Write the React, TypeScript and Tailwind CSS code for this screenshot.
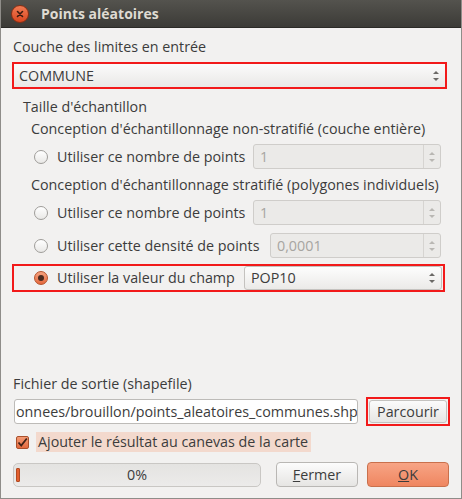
import React from "react";

const font = { fontFamily: '"Open Sans", "DejaVu Sans", sans-serif' };

function Arrows({ dim = false }: { dim?: boolean }) {
  const c = dim ? "#b9b7b3" : "#6b6966";
  return (
    <svg width="8" height="14" viewBox="0 0 8 14" className="shrink-0">
      <path d="M1 5 L4 2 L7 5 Z" fill={c} />
      <path d="M1 9 L4 12 L7 9 Z" fill={c} />
    </svg>
  );
}

function Radio({ checked = false }: { checked?: boolean }) {
  if (checked) {
    return (
      <div className="w-[14px] h-[14px] rounded-full border border-[#b5532c] bg-gradient-to-b from-[#f5a17e] to-[#e5683c] flex items-center justify-center shrink-0">
        <div className="w-[6px] h-[6px] rounded-full bg-[#4a2a1f]" />
      </div>
    );
  }
  return <div className="w-[14px] h-[14px] rounded-full border border-[#9f9d99] bg-gradient-to-b from-white to-[#e9e8e6] shrink-0" />;
}

function SpinBox({ value, width }: { value: string; width: string }) {
  return (
    <div className={`${width} h-[25px] rounded-[3px] border border-[#cfcdca] bg-[#ebeae8] flex items-stretch`}>
      <div className="flex-1 flex items-center pl-[6px] text-[14.3px] text-[#a7a5a1]">{value}</div>
      <div className="w-[17px] border-l border-[#d6d4d1] flex items-center justify-center">
        <Arrows dim />
      </div>
    </div>
  );
}

function RadioRow({ label, value, spinW, checked }: { label: string; value: string; spinW: string; checked?: boolean }) {
  return (
    <div className="flex items-center h-[25px]">
      <div className="w-[56px] pl-[33px] flex items-center">
        <Radio checked={checked} />
      </div>
      <div className="flex-1 text-[14.3px] text-[#3c3c3c] whitespace-nowrap">{label}</div>
      <SpinBox value={value} width={spinW} />
      <div className="w-[20px]" />
    </div>
  );
}

export default function App() {
  return (
    <div className="w-[462px] h-[499px] bg-[#f2f1f0] flex flex-col border-x border-b border-[#8f8d89] overflow-hidden" style={font}>
      {/* title bar */}
      <div className="h-[28px] bg-gradient-to-b from-[#54534e] to-[#3c3b37] border-b border-[#2b2a27] flex items-center shrink-0">
        <div className="ml-[10px] w-[18px] h-[18px] rounded-full bg-gradient-to-b from-[#f17a52] to-[#d9461e] border border-[#8a2f14] flex items-center justify-center">
          <svg width="8" height="8" viewBox="0 0 8 8">
            <path d="M1.5 1.5 L6.5 6.5 M6.5 1.5 L1.5 6.5" stroke="#3a1a10" strokeWidth="1.6" strokeLinecap="round" />
          </svg>
        </div>
        <div className="ml-[12px] text-[14px] font-bold text-[#dfdbd2]">Points aléatoires</div>
      </div>

      <div className="flex flex-col pl-[11px] text-[#3c3c3c] whitespace-nowrap">
        <div className="mt-[10px] h-[18px] leading-[18px] text-[14.3px] pl-[1px]">Couche des limites en entrée</div>

        <div className="mt-[6px] w-[435px] h-[27px] border-2 border-[#f21a1a] bg-gradient-to-b from-[#fbfbfb] to-[#e9e8e6] flex items-center px-[5px]">
          <div className="flex-1 text-[14.3px]">COMMUNE</div>
          <Arrows />
        </div>

        <div className="mt-[9px] h-[18px] leading-[18px] text-[14.3px] pl-[11px]">Taille d'échantillon</div>
        <div className="mt-[4px] h-[18px] leading-[18px] text-[14.3px] pl-[19px]">Conception d'échantillonnage non-stratifié (couche entière)</div>
        <div className="mt-[6px] -ml-[11px]">
          <RadioRow label="Utiliser ce nombre de points" value="1" spinW="w-[188px]" />
        </div>
        <div className="mt-[7px] h-[18px] leading-[18px] text-[14.3px] pl-[19px]">Conception d'échantillonnage stratifié (polygones individuels)</div>
        <div className="mt-[6px] -ml-[11px]">
          <RadioRow label="Utiliser ce nombre de points" value="1" spinW="w-[188px]" />
        </div>
        <div className="mt-[8px] -ml-[11px]">
          <RadioRow label="Utiliser cette densité de points" value="0,0001" spinW="w-[171px]" />
        </div>

        <div className="mt-[6px] w-[433px] h-[28px] border-2 border-[#f21a1a] flex items-center">
          <div className="w-[43px] pl-[20px] flex items-center">
            <Radio checked />
          </div>
          <div className="flex-1 text-[14.3px]">Utiliser la valeur du champ</div>
          <div className="w-[198px] h-[24px] mr-[1px] rounded-[3px] border border-[#c4c2bf] bg-gradient-to-b from-[#fdfdfd] to-[#ebeae8] flex items-center pl-[6px] pr-[5px]">
            <div className="flex-1 text-[14.3px]">POP10</div>
            <Arrows />
          </div>
        </div>

        <div className="mt-[83px] h-[18px] leading-[18px] text-[14.3px] pl-[1px]">Fichier de sortie (shapefile)</div>

        <div className="mt-[4px] flex items-center">
          <div className="ml-[2px] w-[344px] h-[25px] rounded-[3px] border border-[#bdbbb8] bg-white flex items-center overflow-hidden">
            <div className="whitespace-nowrap text-[14.3px] pl-[1px]">onnees/brouillon/points_aleatoires_communes.shp</div>
          </div>
          <div className="ml-[8px] w-[84px] h-[29px] border-2 border-[#f21a1a] flex">
            <div className="flex-1 m-[1px] rounded-[3px] border border-[#c4c2bf] bg-gradient-to-b from-[#fbfbfb] to-[#e7e6e4] flex items-center justify-center text-[14.3px]">
              Parcourir
            </div>
          </div>
        </div>

        <div className="mt-[6px] flex items-center h-[20px]">
          <div className="ml-[4px] w-[13px] h-[13px] rounded-[2px] border border-[#a9502c] bg-gradient-to-b from-[#f39a74] to-[#e36a3e] flex items-center justify-center">
            <svg width="11" height="11" viewBox="0 0 11 11">
              <path d="M1.5 5.5 L4.2 8.5 L9.8 1.5" stroke="#3f2218" strokeWidth="1.8" fill="none" />
            </svg>
          </div>
          <div className="ml-[7px] h-[20px] leading-[20px] bg-[#f3d9cd] text-[14.3px] pl-[2px] pr-[3px]">Ajouter le résultat au canevas de la carte</div>
        </div>

        <div className="mt-[10px] flex items-center">
          <div className="ml-[1px] w-[248px] h-[24px] rounded-[5px] border border-[#c9c7c4] bg-gradient-to-b from-[#e4e3e1] to-[#ecebea] flex items-center relative">
            <div className="absolute left-[2px] top-[4px] w-[4px] h-[14px] rounded-[1px] bg-[#e3602f] border border-[#b34a22]" />
            <div className="flex-1 text-center text-[14.3px]">0%</div>
          </div>
          <div className="ml-[15px] w-[82px] h-[25px] rounded-[4px] border border-[#b9b7b4] bg-gradient-to-b from-[#fcfcfc] to-[#e6e5e3] flex items-center justify-center text-[14.3px]">
            <span><span className="underline">F</span>ermer</span>
          </div>
          <div className="ml-[9px] w-[82px] h-[25px] rounded-[4px] border border-[#c9704c] bg-gradient-to-b from-[#f7a485] to-[#ef8660] flex items-center justify-center text-[14.3px]">
            <span><span className="underline">O</span>K</span>
          </div>
        </div>
      </div>
    </div>
  );
}
